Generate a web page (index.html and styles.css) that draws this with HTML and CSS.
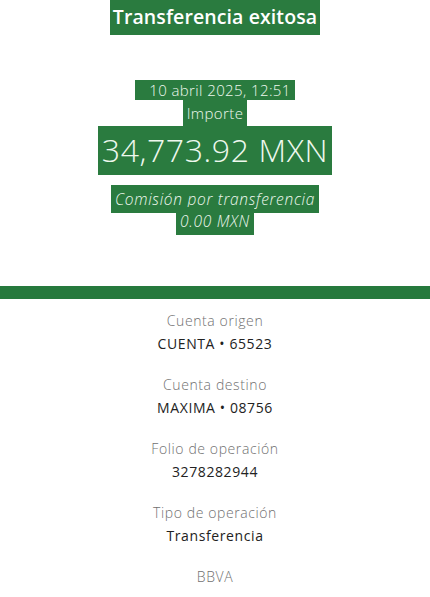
FILE: index.html
```html
<!DOCTYPE html>
<html lang="es">
<head>
    <meta charset="UTF-8">
    <meta name="viewport" content="width=device-width, initial-scale=1.0">
    <title>Transferencia exitosa</title>
    <link rel="stylesheet" href="styles.css">
</head>
<body>
    <div class="header">
        <h1><span class="tag">Transferencia exitosa</span></h1>
        <div class="summary">
            <p class="date"><span class="tag">10 abril 2025, 12:51</span></p>
            <p class="label"><span class="tag">Importe</span></p>
            <p class="amount"><span class="tag">34,773.92 MXN</span></p>
            <p class="fee"><span class="tag">Comisión por transferencia</span></p>
            <p class="fee"><span class="tag">0.00 MXN</span></p>
        </div>
    </div>
    <div class="bar"></div>
    <div class="details">
        <div class="row">
            <span class="row-label">Cuenta origen</span>
            <span class="row-value">CUENTA • 65523</span>
        </div>
        <div class="row">
            <span class="row-label">Cuenta destino</span>
            <span class="row-value">MAXIMA • 08756</span>
        </div>
        <div class="row">
            <span class="row-label">Folio de operación</span>
            <span class="row-value">3278282944</span>
        </div>
        <div class="row">
            <span class="row-label">Tipo de operación</span>
            <span class="row-value">Transferencia</span>
        </div>
        <div class="row last">
            <span class="row-label">BBVA</span>
        </div>
    </div>
</body>
</html>
```

FILE: styles.css
```css
body {
    margin: 0;
    font-family: "Open Sans", "Liberation Sans", sans-serif;
    background: #fff;
    text-align: center;
}
.tag {
    background-color: #2a7b3f;
    color: #eef8ee;
    padding: 3px 4px;
}
.header h1 {
    margin: 0;
    padding-top: 4px;
    font-size: 19.5px;
    font-weight: 600;
    line-height: 26px;
    letter-spacing: 0.1px;
}
.header h1 .tag {
    color: #fff;
    padding: 5px 3px;
}
.summary {
    padding-top: 50px;
}
.summary p {
    margin: 0;
}
.date {
    font-size: 15px;
    font-weight: 300;
    line-height: 20px;
    letter-spacing: 0.4px;
}
.date .tag {
    padding: 0 4px 0 14px;
}
.label {
    font-size: 15px;
    font-weight: 300;
    line-height: 26px;
    letter-spacing: 0.4px;
}
.amount {
    font-size: 32px;
    font-weight: 300;
    line-height: 48px;
    letter-spacing: 0.6px;
}
.amount .tag {
    padding: 2px 4px 4px;
}
.fee {
    font-size: 15.5px;
    font-style: italic;
    font-weight: 300;
    line-height: 22px;
    letter-spacing: 0.7px;
}
.amount + .fee {
    margin-top: 14px;
}
.bar {
    height: 13px;
    margin-top: 54px;
    background-color: #26793d;
}
.details {
    padding-top: 12px;
}
.row {
    display: flex;
    flex-direction: column;
    height: 64px;
}
.row.last {
    height: auto;
}
.row-label {
    font-size: 14px;
    font-weight: 300;
    color: #707070;
    line-height: 20px;
    letter-spacing: 0.6px;
}
.row-value {
    font-size: 14px;
    font-weight: 400;
    color: #222;
    line-height: 20px;
    margin-top: 3px;
    letter-spacing: 0.6px;
}
```
